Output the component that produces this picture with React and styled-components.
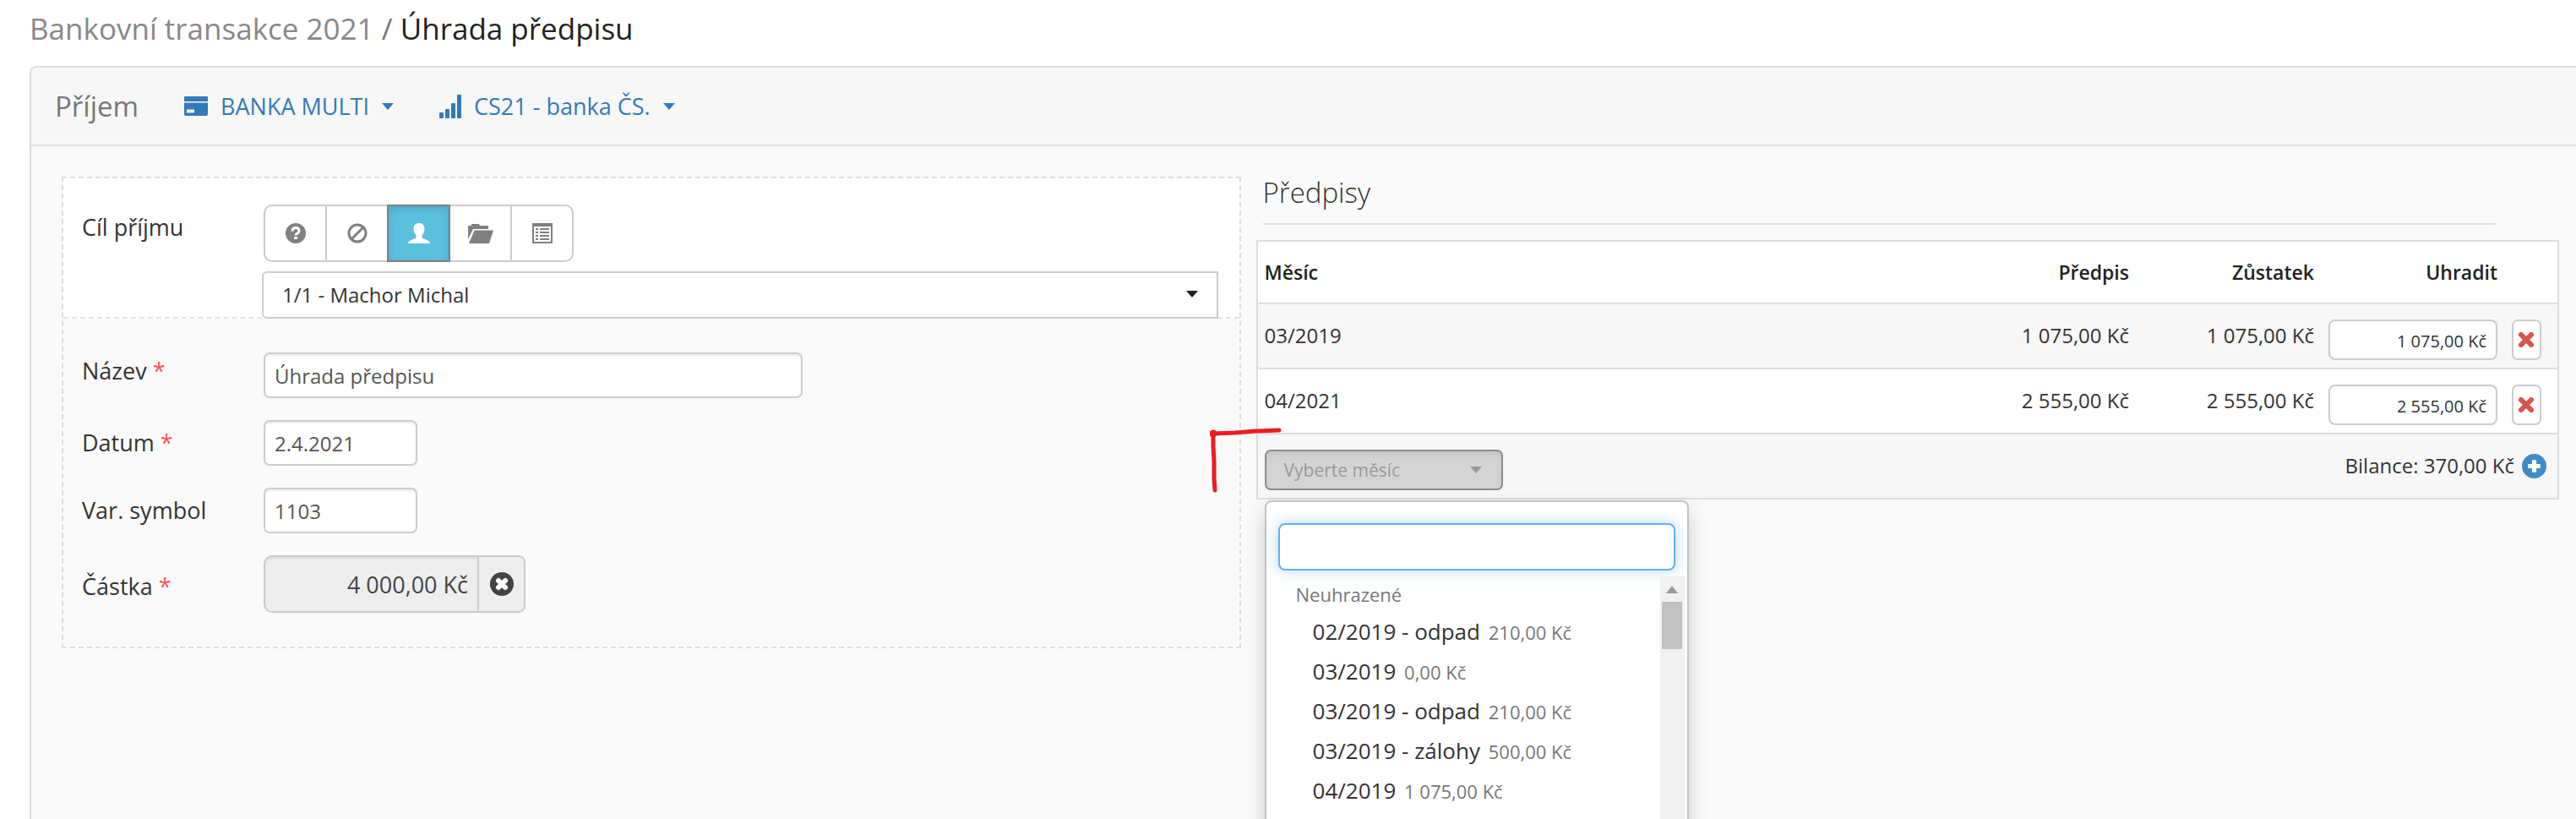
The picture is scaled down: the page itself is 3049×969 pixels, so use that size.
import React from 'react'
import styled, { createGlobalStyle } from 'styled-components'

const charges = [
    { month: '03/2019', amount: '1 075,00 Kč', rest: '1 075,00 Kč', pay: '1 075,00 Kč' },
    { month: '04/2021', amount: '2 555,00 Kč', rest: '2 555,00 Kč', pay: '2 555,00 Kč' },
]

const unpaid = [
    { label: '02/2019 - odpad', amount: '210,00 Kč' },
    { label: '03/2019', amount: '0,00 Kč' },
    { label: '03/2019 - odpad', amount: '210,00 Kč' },
    { label: '03/2019 - zálohy', amount: '500,00 Kč' },
    { label: '04/2019', amount: '1 075,00 Kč' },
]

function Caret({ size = 14 }) {
    return (
        <svg width={size} height={size * 4 / 7} viewBox="0 0 14 8" fill="currentColor" aria-hidden="true">
            <path d="M0 0h14L7 8z" />
        </svg>
    )
}

function CardIcon() {
    return (
        <svg width="28" height="23" viewBox="0 0 28 23" fill="currentColor" aria-hidden="true">
            <path d="M1 0h26q1 0 1 1v5H0V1q0-1 1-1zM0 7.500h28V21q0 2-2 2H2q-2 0-2-2zM3 15.500v4h9v-4z" fillRule="evenodd" />
        </svg>
    )
}

function SignalIcon() {
    return (
        <svg width="26" height="28" viewBox="0 0 26 28" fill="currentColor" aria-hidden="true">
            <rect x="0" y="21" width="5" height="7" rx="1" />
            <rect x="7" y="17" width="5" height="11" rx="1" />
            <rect x="14" y="10" width="5" height="18" rx="1" />
            <rect x="21" y="0" width="5" height="28" rx="1" />
        </svg>
    )
}

function QuestionIcon() {
    return (
        <svg width="24" height="24" viewBox="0 0 24 24" aria-hidden="true">
            <circle cx="12" cy="12" r="12" fill="currentColor" />
            <path d="M8 9.500q0-4 4-4t4 3.500q0 2-2 3t-2 2.500" fill="none" stroke="#fff" strokeWidth="3" />
            <rect x="10" y="16" width="4" height="3" fill="#fff" />
        </svg>
    )
}

function BanIcon() {
    return (
        <svg width="24" height="24" viewBox="0 0 24 24" fill="none" stroke="currentColor" strokeWidth="3" aria-hidden="true">
            <circle cx="12" cy="12" r="10" />
            <path d="M5 19L19 5" />
        </svg>
    )
}

function UserIcon() {
    return (
        <svg width="26" height="24" viewBox="0 0 26 24" fill="currentColor" aria-hidden="true">
            <path d="M13 0c4 0 6.500 2.500 6.500 7 0 3-1.500 6-3 7.500v2c0 1 1 1.500 3 2.300 3.500 1.400 5.500 2 6.500 5.200H0c1-3.200 3-3.800 6.500-5.200 2-.8 3-1.300 3-2.300v-2C8 13 6.500 10 6.500 7 6.500 2.500 9 0 13 0z" />
        </svg>
    )
}

function FolderIcon() {
    return (
        <svg width="30" height="24" viewBox="0 0 30 24" fill="currentColor" aria-hidden="true">
            <path d="M0 19V3h4V1h9l1 2h10v4H6z" />
            <path d="M7.500 8.500H30L25 24H1z" />
        </svg>
    )
}

function ListIcon() {
    return (
        <svg width="24" height="24" viewBox="0 0 24 24" fill="currentColor" aria-hidden="true">
            <path d="M0 0h24v24H0zM2 4v18h20V4z" fillRule="evenodd" />
            <path d="M4 6h3v2H4zM9 6h11v2H9zM4 10h3v2H4zM9 10h11v2H9zM4 14h3v2H4zM9 14h11v2H9zM4 18h3v2H4zM9 18h11v2H9z" />
        </svg>
    )
}

function CircleCrossIcon() {
    return (
        <svg width="28" height="28" viewBox="0 0 28 28" aria-hidden="true">
            <circle cx="14" cy="14" r="14" fill="currentColor" />
            <path d="M10 10l8 8M18 10l-8 8" stroke="#fff" strokeWidth="6" strokeLinecap="round" />
        </svg>
    )
}

function CrossIcon() {
    return (
        <svg width="18" height="18" viewBox="0 0 18 18" aria-hidden="true">
            <path d="M3 3l12 12M15 3L3 15" stroke="currentColor" strokeWidth="6" strokeLinecap="round" />
        </svg>
    )
}

function CirclePlusIcon() {
    return (
        <svg width="29" height="29" viewBox="0 0 28 28" aria-hidden="true">
            <circle cx="14" cy="14" r="14" fill="currentColor" />
            <path d="M14 7v14M7 14h14" stroke="#fff" strokeWidth="5" />
        </svg>
    )
}

const targets = [
    { name: 'Neznámý', icon: <QuestionIcon /> },
    { name: 'Žádný', icon: <BanIcon /> },
    { name: 'Osoba', icon: <UserIcon />, active: true },
    { name: 'Složka', icon: <FolderIcon /> },
    { name: 'Seznam', icon: <ListIcon /> },
]

function Field({ id, label, required, line, children }) {
    return (
        <FieldRow>
            <Label htmlFor={id} $line={line}>
                {label} {required && <Required>*</Required>}
            </Label>
            {children}
        </FieldRow>
    )
}

function MonthPicker() {
    return (
        <PickerWrap>
            <PickerButton type="button" aria-haspopup="listbox" aria-expanded="true">
                Vyberte měsíc
                <Caret />
            </PickerButton>
            <Menu>
                <SearchBox>
                    <SearchInput type="text" aria-label="Hledat měsíc" />
                </SearchBox>
                <MenuScroll>
                    <Options role="listbox" aria-label="Neuhrazené">
                        <GroupName role="presentation">Neuhrazené</GroupName>
                        {unpaid.map((item) => (
                            <Option key={item.label} role="option">
                                {item.label} <small>{item.amount}</small>
                            </Option>
                        ))}
                    </Options>
                    <ScrollTrack aria-hidden="true">
                        <svg width="14" height="9" viewBox="0 0 14 9" fill="#999">
                            <path d="M0 9h14L7 0z" />
                        </svg>
                        <ScrollThumb />
                    </ScrollTrack>
                </MenuScroll>
            </Menu>
            <RedMark width="86" height="80" viewBox="0 0 86 80" aria-hidden="true">
                <path d="M4 8v15l1 18v20l1 14M4 8l26-1 25-2 27-1" />
                <circle cx="4" cy="8" r="2" />
            </RedMark>
        </PickerWrap>
    )
}

function ChargesTable() {
    return (
        <Table>
            <thead>
                <tr>
                    <HeadCell $align="left">Měsíc</HeadCell>
                    <HeadCell $width={220}>Předpis</HeadCell>
                    <HeadCell $width={219}>Zůstatek</HeadCell>
                    <HeadCell $width={217}>Uhradit</HeadCell>
                    <HeadCell $width={62} />
                </tr>
            </thead>
            <tbody>
                {charges.map((row) => (
                    <Row key={row.month}>
                        <Cell $align="left">{row.month}</Cell>
                        <Cell>{row.amount}</Cell>
                        <Cell>{row.rest}</Cell>
                        <Cell>
                            <PayInput type="text" defaultValue={row.pay} aria-label={'Uhradit ' + row.month} />
                        </Cell>
                        <Cell $align="left">
                            <RemoveButton type="button" aria-label={'Odebrat ' + row.month}>
                                <CrossIcon />
                            </RemoveButton>
                        </Cell>
                    </Row>
                ))}
                <Row>
                    <Cell $align="left">
                        <MonthPicker />
                    </Cell>
                    <Cell colSpan={4}>
                        <Balance>
                            Bilance: 370,00 Kč
                            <AddButton type="button" aria-label="Přidat">
                                <CirclePlusIcon />
                            </AddButton>
                        </Balance>
                    </Cell>
                </Row>
            </tbody>
        </Table>
    )
}

function App() {
    return (
        <Page>
            <GlobalStyle />
            <Title>
                <a href="#transakce">Bankovní transakce 2021</a> / <span>Úhrada předpisu</span>
            </Title>
            <Panel>
                <PanelHeader>
                    <PanelName>Příjem</PanelName>
                    <HeaderLink href="#banka">
                        <CardIcon />
                        BANKA MULTI
                        <Caret />
                    </HeaderLink>
                    <HeaderLink href="#ucet">
                        <SignalIcon />
                        CS21 - banka ČS.
                        <Caret />
                    </HeaderLink>
                </PanelHeader>
                <PanelBody>
                    <Form>
                        <TargetSection>
                            <Label htmlFor="target" $line={54}>Cíl příjmu</Label>
                            <div>
                                <ButtonGroup>
                                    {targets.map((t) => (
                                        <GroupButton key={t.name} type="button" aria-label={t.name} $active={t.active}>
                                            {t.icon}
                                        </GroupButton>
                                    ))}
                                </ButtonGroup>
                                <SelectWrap>
                                    <Select id="target">
                                        <option>1/1 - Machor Michal</option>
                                    </Select>
                                    <Caret />
                                </SelectWrap>
                            </div>
                        </TargetSection>
                        <Fields>
                            <Field id="name" label="Název" required line={44}>
                                <TextInput id="name" type="text" defaultValue="Úhrada předpisu" $width={638} />
                            </Field>
                            <Field id="date" label="Datum" required line={54}>
                                <TextInput id="date" type="text" defaultValue="2.4.2021" $width={182} />
                            </Field>
                            <Field id="symbol" label="Var. symbol" line={54}>
                                <TextInput id="symbol" type="text" defaultValue="1103" $width={182} />
                            </Field>
                            <Field id="amount" label="Částka" required line={74}>
                                <AmountGroup>
                                    <AmountInput id="amount" type="text" defaultValue="4 000,00 Kč" readOnly />
                                    <ClearButton type="button" aria-label="Vymazat částku">
                                        <CircleCrossIcon />
                                    </ClearButton>
                                </AmountGroup>
                            </Field>
                        </Fields>
                    </Form>
                    <section>
                        <SectionTitle>Předpisy</SectionTitle>
                        <ChargesTable />
                    </section>
                </PanelBody>
            </Panel>
        </Page>
    )
}
export default App

const GlobalStyle = createGlobalStyle`
  *{
      box-sizing: border-box;
  }
  body{
      margin: 0;
      background: #fff;
      color: #333;
      font-family: "Open Sans", "Noto Sans", sans-serif;
      font-size: 24px;
  }
  button, input, select{
      margin: 0;
      font-family: inherit;
      color: inherit;
  }
  svg{
      display: block;
      flex: none;
  }
`

const Page = styled.div`
  display: flex;
  flex-direction: column;
  height: 100vh;
  overflow: hidden;
  padding-left: 35px;
`

const Title = styled.h1`
  margin: 10px 0 20px;
  font-size: 35px;
  line-height: 48px;
  font-weight: 400;
  color: #777;

  a{
      color: #888;
      text-decoration: none;
  }
  span{
      color: #222;
  }
`

const Panel = styled.div`
  flex: 1;
  border: 2px solid #ddd;
  border-right: 0;
  border-bottom: 0;
  border-top-left-radius: 8px;
  background: #fafafa;
`

const PanelHeader = styled.div`
  display: flex;
  align-items: center;
  height: 93px;
  padding-left: 28px;
  border-bottom: 2px solid #e2e2e2;
  border-top-left-radius: 6px;
  background: #f7f7f7;
`

const PanelName = styled.div`
  font-size: 33px;
  color: #777;
`

const HeaderLink = styled.a`
  display: flex;
  align-items: center;
  gap: 15px;
  margin-left: 54px;
  font-size: 27px;
  color: #337ab7;
  text-decoration: none;
`

const PanelBody = styled.div`
  display: grid;
  grid-template-columns: 19fr 21fr;
  gap: 18px;
  align-items: start;
  padding: 36px 20px 0 36px;
`

const Form = styled.form`
  border: 2px dashed #ddd;
`

const TargetSection = styled.div`
  display: grid;
  grid-template-columns: 215px 1fr;
  padding: 31px 25px 0 22px;
  border-bottom: 2px dashed #e4e4e4;
  background: #fff;
`

const Label = styled.label`
  font-size: 27px;
  line-height: ${(props) => props.$line}px;
`

const Required = styled.span`
  color: #f55;
`

const ButtonGroup = styled.div`
  display: flex;
  width: max-content;
  margin-bottom: 11px;
`

const GroupButton = styled.button`
  display: flex;
  align-items: center;
  justify-content: center;
  width: 75px;
  height: 68px;
  padding: 0;
  border: 2px solid ${(props) => (props.$active ? '#808080' : '#ccc')};
  background: ${(props) => (props.$active ? '#5bc0de' : '#fff')};
  box-shadow: ${(props) => (props.$active ? 'inset 0 4px 8px rgba(0, 0, 0, 0.12)' : 'none')};
  color: ${(props) => (props.$active ? '#fff' : '#808080')};
  z-index: ${(props) => (props.$active ? 1 : 0)};

  & + &{
      margin-left: -2px;
  }
  &:first-child{
      border-radius: 10px 0 0 10px;
  }
  &:last-child{
      border-radius: 0 10px 10px 0;
  }
`

const SelectWrap = styled.div`
  position: relative;
  margin: 0 0 -2px -2px;

  svg{
      position: absolute;
      right: 24px;
      top: 23px;
      color: #222;
      pointer-events: none;
  }
`

const Select = styled.select`
  display: block;
  width: 100%;
  height: 56px;
  padding: 0 22px 2px;
  border: 2px solid #ccc;
  border-radius: 6px 0 0 6px;
  background: #fff;
  appearance: none;
  font-size: 24px;
`

const Fields = styled.div`
  display: flex;
  flex-direction: column;
  gap: 26px;
  padding: 40px 25px 34px 22px;
`

const FieldRow = styled.div`
  display: grid;
  grid-template-columns: 215px 1fr;
  align-items: start;
`

const TextInput = styled.input`
  width: ${(props) => props.$width}px;
  height: 54px;
  padding: 0 11px;
  border: 2px solid #ccc;
  border-radius: 7px;
  background: #fff;
  box-shadow: inset 0 2px 2px rgba(0, 0, 0, 0.07);
  font-size: 24px;
  color: #555;
`

const AmountGroup = styled.div`
  display: flex;
  width: 310px;
  height: 68px;
`

const AmountInput = styled.input`
  flex: 1;
  min-width: 0;
  padding: 0 11px;
  border: 2px solid #ccc;
  border-radius: 10px 0 0 10px;
  background: #eee;
  box-shadow: inset 0 2px 2px rgba(0, 0, 0, 0.07);
  font-size: 27px;
  text-align: right;
  color: #444;
`

const ClearButton = styled.button`
  display: flex;
  align-items: center;
  justify-content: center;
  width: 55px;
  padding: 0;
  border: 2px solid #ccc;
  border-left: 0;
  border-radius: 0 8px 8px 0;
  background: #eee;
  color: #444;
`

const SectionTitle = styled.h2`
  margin: 0 75px 18px 8px;
  padding-bottom: 17px;
  border-bottom: 2px solid #ddd;
  font-size: 33px;
  line-height: 38px;
  font-weight: 300;
  color: #333;
`

const Table = styled.table`
  width: 100%;
  table-layout: fixed;
  border: 2px solid #ddd;
  border-bottom: 0;
  border-spacing: 0;
  background: #fff;
`

const HeadCell = styled.th`
  width: ${(props) => (props.$width ? props.$width + 'px' : 'auto')};
  height: 74px;
  padding: 0 9px 0 8px;
  border-bottom: 2px solid #ddd;
  font-size: 23px;
  font-weight: 600;
  text-align: ${(props) => props.$align || 'right'};
  color: #222;
`

const Row = styled.tr`
  &:nth-child(odd){
      background: #f7f7f7;
  }
`

const Cell = styled.td`
  height: 77px;
  padding: 18px 9px 0 8px;
  border-bottom: 2px solid #ddd;
  vertical-align: top;
  font-size: 24px;
  line-height: 38px;
  text-align: ${(props) => props.$align || 'right'};
`

const PayInput = styled.input`
  display: block;
  width: 100%;
  height: 48px;
  padding: 2px 11px 0;
  border: 2px solid #ccc;
  border-radius: 8px;
  background: #fff;
  font-size: 20px;
  text-align: right;
`

const RemoveButton = styled.button`
  display: flex;
  align-items: center;
  justify-content: center;
  width: 35px;
  height: 48px;
  padding: 0;
  border: 2px solid #ccc;
  border-radius: 7px;
  background: #fff;
  color: #d9534f;
`

const Balance = styled.div`
  display: flex;
  align-items: center;
  justify-content: flex-end;
  gap: 9px;
  padding-right: 4px;
`

const AddButton = styled.button`
  padding: 0;
  border: 0;
  background: none;
  color: #428bca;
`

const PickerWrap = styled.div`
  position: relative;
  width: 282px;
`

const PickerButton = styled.button`
  display: flex;
  align-items: center;
  justify-content: space-between;
  width: 100%;
  height: 48px;
  padding: 0 23px 0 21px;
  border: 2px solid #8c8c8c;
  border-radius: 7px;
  background: #d4d4d4;
  box-shadow: inset 0 4px 8px rgba(0, 0, 0, 0.08);
  font-size: 21px;
  color: #999;
`

const Menu = styled.div`
  position: absolute;
  top: 60px;
  left: 0;
  z-index: 5;
  width: 502px;
  height: 560px;
  padding-top: 25px;
  border: 2px solid #c4c4c4;
  border-radius: 8px;
  background: #fff;
  box-shadow: 0 12px 24px rgba(0, 0, 0, 0.18);
`

const SearchBox = styled.div`
  padding: 0 14px 7px;
`

const SearchInput = styled.input`
  display: block;
  width: 100%;
  height: 56px;
  padding: 0 12px;
  border: 2px solid #66afe9;
  border-radius: 8px;
  outline: 0;
  box-shadow: 0 0 16px rgba(102, 175, 233, 0.5);
  font-size: 24px;
`

const MenuScroll = styled.div`
  display: flex;
  height: 460px;
`

const Options = styled.ul`
  flex: 1;
  margin: 0;
  padding: 0;
  list-style: none;
`

const GroupName = styled.li`
  padding: 0 35px;
  font-size: 22px;
  line-height: 42px;
  color: #777;
`

const Option = styled.li`
  padding: 0 55px;
  font-size: 26px;
  line-height: 47px;

  small{
      margin-left: 3px;
      font-size: 22px;
      line-height: 22px;
      color: #777;
  }
`

const ScrollTrack = styled.div`
  display: flex;
  flex-direction: column;
  align-items: center;
  gap: 10px;
  width: 29px;
  margin-right: 3px;
  padding-top: 11px;
  background: #f1f1f1;
`

const ScrollThumb = styled.div`
  width: 24px;
  height: 56px;
  background: #c1c1c1;
`

const RedMark = styled.svg`
  position: absolute;
  top: -27px;
  left: -65px;
  z-index: 6;
  fill: none;
  stroke: #ed1c24;
  stroke-width: 5;
  stroke-linecap: round;
  stroke-linejoin: round;
  pointer-events: none;
`
